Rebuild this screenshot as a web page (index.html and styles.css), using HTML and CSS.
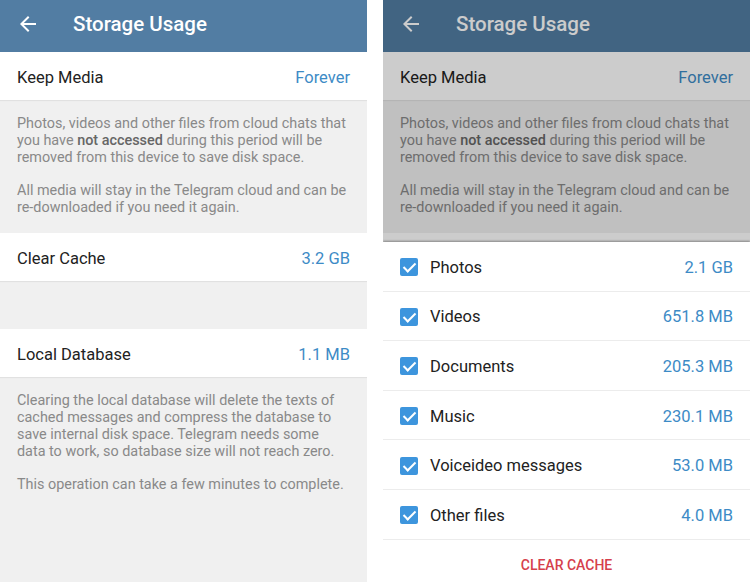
FILE: index.html
```html
<!DOCTYPE html>
<html lang="en">
<head>
    <meta charset="UTF-8">
    <meta name="viewport" content="width=device-width, initial-scale=1.0">
    <title>Storage Usage</title>
    <link rel="stylesheet" href="styles.css">
</head>
<body>
    <div class="screens">
        <!-- storage settings -->
        <section class="phone">
            <header class="toolbar">
                <svg class="back" width="24" height="24" viewBox="0 0 24 24"><path d="M20 11H7.83l5.59-5.59L12 4l-8 8 8 8 1.41-1.41L7.83 13H20v-2z" fill="#fff"/></svg>
                <h1 class="title">Storage Usage</h1>
            </header>
            <div class="cell"><span>Keep Media</span><span class="value">Forever</span></div>
            <div class="info">
                <p>Photos, videos and other files from cloud chats that<br>you have <b>not accessed</b> during this period will be<br>removed from this device to save disk space.</p>
                <p>All media will stay in the Telegram cloud and can be<br>re-downloaded if you need it again.</p>
            </div>
            <div class="cell"><span>Clear Cache</span><span class="value">3.2 GB</span></div>
            <div class="spacer"></div>
            <div class="cell"><span>Local Database</span><span class="value">1.1 MB</span></div>
            <div class="info">
                <p>Clearing the local database will delete the texts of<br>cached messages and compress the database to<br>save internal disk space. Telegram needs some<br>data to work, so database size will not reach zero.</p>
                <p>This operation can take a few minutes to complete.</p>
            </div>
        </section>

        <!-- same screen with the clear cache sheet open -->
        <section class="phone phone-dialog">
            <div class="backdrop">
                <header class="toolbar">
                    <svg class="back" width="24" height="24" viewBox="0 0 24 24"><path d="M20 11H7.83l5.59-5.59L12 4l-8 8 8 8 1.41-1.41L7.83 13H20v-2z" fill="#fff"/></svg>
                    <h1 class="title">Storage Usage</h1>
                </header>
                <div class="cell"><span>Keep Media</span><span class="value">Forever</span></div>
                <div class="info">
                    <p>Photos, videos and other files from cloud chats that<br>you have <b>not accessed</b> during this period will be<br>removed from this device to save disk space.</p>
                    <p>All media will stay in the Telegram cloud and can be<br>re-downloaded if you need it again.</p>
                </div>
                <div class="cell"></div>
            </div>
            <div class="sheet">
                <div class="check-row"><span class="box"></span><span class="label">Photos</span><span class="value">2.1 GB</span></div>
                <div class="check-row"><span class="box"></span><span class="label">Videos</span><span class="value">651.8 MB</span></div>
                <div class="check-row"><span class="box"></span><span class="label">Documents</span><span class="value">205.3 MB</span></div>
                <div class="check-row"><span class="box"></span><span class="label">Music</span><span class="value">230.1 MB</span></div>
                <div class="check-row"><span class="box"></span><span class="label">Voiceideo messages</span><span class="value">53.0 MB</span></div>
                <div class="check-row"><span class="box"></span><span class="label">Other files</span><span class="value">4.0 MB</span></div>
                <div class="sheet-btn">Clear Cache</div>
            </div>
        </section>
    </div>
</body>
</html>
```

FILE: styles.css
```css
/* base */
* {
    margin: 0;
    padding: 0;
    box-sizing: border-box;
}

body {
    background: #fff;
    font-family: Roboto, 'Noto Sans', Arial, sans-serif;
    color: #222;
    overflow: hidden;
}

.screens {
    display: flex;
    gap: 16px;
    height: 582px;
}

.phone {
    width: 367px;
    height: 582px;
    background: #f0f0f0;
    display: flex;
    flex-direction: column;
    overflow: hidden;
}

/* toolbar */
.toolbar {
    height: 52px;
    flex-shrink: 0;
    background: #527da3;
    display: flex;
    align-items: center;
    padding: 0 0 5px 16px;
    gap: 33px;
}

.back {
    display: block;
}

.title {
    color: #fff;
    font-size: 20.5px;
    font-weight: 500;
}

/* rows */
.cell {
    height: 48px;
    flex-shrink: 0;
    background: #fff;
    display: flex;
    align-items: center;
    justify-content: space-between;
    padding: 2px 17px 0;
    font-size: 16.5px;
    box-shadow: 0 1px 1px rgba(0, 0, 0, 0.06);
    position: relative;
}

.value {
    color: #3d8bc6;
}

.info {
    padding: 15px 17px 17px;
    color: #898989;
    font-size: 14.4px;
    line-height: 17px;
    white-space: nowrap;
}

.info p + p {
    margin-top: 16px;
}

.info b {
    font-weight: 500;
    color: #666;
}

.spacer {
    height: 48px;
    flex-shrink: 0;
}

/* dimmed screen behind the sheet */
.backdrop {
    position: relative;
    flex: 1;
    overflow: hidden;
}

.backdrop::after {
    content: '';
    position: absolute;
    inset: 0;
    background: rgba(0, 0, 0, 0.2);
}

/* bottom sheet */
.sheet {
    height: 340px;
    flex-shrink: 0;
    background: #fff;
    box-shadow: 0 -1px 2px rgba(0, 0, 0, 0.35);
    position: relative;
}

.check-row {
    height: 49.6px;
    display: flex;
    align-items: center;
    padding: 2px 17px 0;
    font-size: 16.5px;
    border-bottom: 1px solid #ececec;
}

.box {
    width: 18px;
    height: 18px;
    border-radius: 2px;
    background: #3d95dd;
    margin-right: 12px;
    position: relative;
}

.box::after {
    content: '';
    position: absolute;
    left: 6px;
    top: 2px;
    width: 5px;
    height: 10px;
    border: solid #fff;
    border-width: 0 2px 2px 0;
    transform: rotate(45deg);
}

.label {
    flex: 1;
}

.sheet-btn {
    height: 48px;
    display: flex;
    align-items: center;
    justify-content: center;
    color: #d6404c;
    font-size: 14px;
    font-weight: 500;
    text-transform: uppercase;
    padding-top: 2px;
}
```
